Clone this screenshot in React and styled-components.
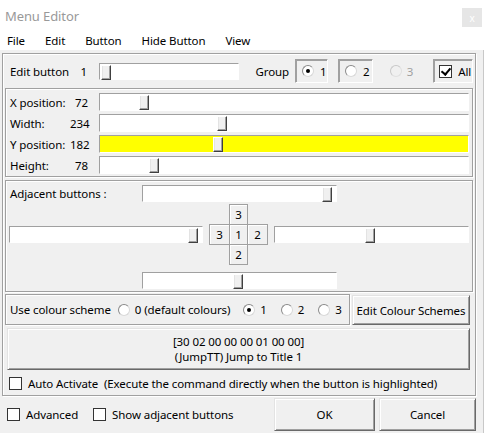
import React from 'react';
import styled, { createGlobalStyle } from 'styled-components';

const GlobalStyle = createGlobalStyle`
    html, body {
        margin: 0;
        padding: 0;
    }
    body {
        width: 484px;
        height: 433px;
        overflow: hidden;
        background: #f0f0f0;
        font-family: "Noto Sans", "Segoe UI", sans-serif;
        font-size: 11.5px;
        letter-spacing: -0.1px;
        color: #000;
    }
`;

const Window = styled.div`
    width: 484px;
    height: 433px;
    display: flex;
    flex-direction: column;
    background: #f0f0f0;
`;

const TitleBar = styled.div`
    height: 30px;
    background: #fff;
    display: flex;
    align-items: flex-start;
    justify-content: space-between;
    padding: 0 2px 0 5px;
    color: #999;
    font-size: 13px;
`;

const Title = styled.span`
    margin-top: 7px;
`;

const CloseBox = styled.div`
    width: 20px;
    height: 19px;
    margin-top: 8px;
    background: #e6e6e6;
    color: #fff;
    font-size: 10px;
    display: flex;
    align-items: center;
    justify-content: center;
`;

const MenuBar = styled.div`
    height: 20px;
    background: #fff;
    display: flex;
    align-items: center;
    gap: 20px;
    padding-left: 7px;
`;

const Body = styled.div`
    flex: 1;
    display: flex;
    flex-direction: column;
    padding: 3px 7px 0 2px;
    border-right: 1px solid #c8c8c8;
`;

const Frame = styled.div`
    height: 343px;
    box-sizing: border-box;
    border: 1px solid #a0a0a0;
    box-shadow: inset 1px 1px 0 #fff, 1px 1px 0 #fff;
    padding: 0 2px;
    display: flex;
    flex-direction: column;
`;

const EditRow = styled.div`
    height: 34px;
    display: flex;
    align-items: center;
    padding-left: 5px;
`;

const Text = styled.span`
    display: inline-block;
    width: ${(p) => (p.w ? `${p.w}px` : 'auto')};
    text-align: ${(p) => p.align || 'left'};
    color: ${(p) => (p.disabled ? '#a0a0a0' : '#000')};
    margin-left: ${(p) => p.ml || 0}px;
    white-space: nowrap;
`;

const Track = styled.div`
    position: relative;
    box-sizing: border-box;
    width: ${(p) => p.w}px;
    height: ${(p) => p.h || 18}px;
    margin-left: ${(p) => p.ml || 0}px;
    background: ${(p) => p.bg || '#fff'};
    border-top: 1px solid #a0a0a0;
    border-left: 1px solid #a0a0a0;
    border-right: 1px solid #fff;
    border-bottom: 1px solid #fff;
    flex-shrink: 0;
`;

const Thumb = styled.div`
    position: absolute;
    top: 1px;
    width: 10px;
    height: 15px;
    box-sizing: border-box;
    background: #f0f0f0;
    border-top: 1px solid #fff;
    border-left: 1px solid #fff;
    border-right: 1px solid #404040;
    border-bottom: 1px solid #404040;
    box-shadow: inset -1px -1px 0 #a0a0a0, inset 1px 0 0 #e3e3e3;
`;

const Slider = ({ w, pos, bg, h, ml }) => (
    <Track w={w} bg={bg} h={h} ml={ml}>
        <Thumb style={{ left: pos }} />
    </Track>
);

const Sunken = styled.div`
    box-sizing: border-box;
    width: ${(p) => p.w}px;
    height: 24px;
    margin-left: ${(p) => p.ml || 0}px;
    display: flex;
    align-items: center;
    gap: 6px;
    padding-left: ${(p) => p.pl || 6}px;
    border-top: 1px solid #a0a0a0;
    border-left: 1px solid #a0a0a0;
    border-right: 1px solid #fff;
    border-bottom: 1px solid #fff;
    box-shadow: 1px 1px 0 #a0a0a0 inset;
`;

const RadioCircle = styled.span`
    display: inline-block;
    box-sizing: border-box;
    width: 12px;
    height: 12px;
    border-radius: 50%;
    border: 1px solid ${(p) => (p.disabled ? '#c8c8c8' : '#8a8a8a')};
    border-right-color: ${(p) => (p.disabled ? '#e0e0e0' : '#d8d8d8')};
    border-bottom-color: ${(p) => (p.disabled ? '#e0e0e0' : '#d8d8d8')};
    background: ${(p) => (p.disabled ? '#f0f0f0' : '#fff')};
    position: relative;
    flex-shrink: 0;
    &::after {
        content: '';
        display: ${(p) => (p.checked ? 'block' : 'none')};
        position: absolute;
        left: 3px;
        top: 3px;
        width: 4px;
        height: 4px;
        border-radius: 50%;
        background: #000;
    }
`;

const CheckBox = styled.span`
    display: inline-block;
    box-sizing: border-box;
    width: 13px;
    height: 13px;
    background: #fff;
    border: 1px solid #333;
    position: relative;
    flex-shrink: 0;
    &::after {
        content: '';
        display: ${(p) => (p.checked ? 'block' : 'none')};
        position: absolute;
        left: 3px;
        top: 0px;
        width: 4px;
        height: 7px;
        border-right: 2px solid #000;
        border-bottom: 2px solid #000;
        transform: rotate(40deg);
    }
`;

const GroupBox = styled.div`
    box-sizing: border-box;
    margin-top: ${(p) => p.mt || 0}px;
    width: ${(p) => (p.w ? `${p.w}px` : 'auto')};
    height: ${(p) => p.h}px;
    border: 1px solid #a0a0a0;
    box-shadow: inset 1px 1px 0 #fff, 1px 1px 0 #fff;
    display: flex;
    flex-direction: column;
    flex-shrink: 0;
`;

const PosRows = styled.div`
    display: flex;
    flex-direction: column;
    gap: 3px;
    padding: 4px 0 0 4px;
`;

const PosRow = styled.div`
    height: 18px;
    display: flex;
    align-items: center;
`;

const AdjRow = styled.div`
    display: flex;
    align-items: center;
    height: 17px;
    margin-top: 4px;
    padding-left: 4px;
`;

const CrossRow = styled.div`
    display: flex;
    align-items: center;
    margin-top: 2px;
    padding-left: 3px;
`;

const Cross = styled.div`
    display: grid;
    grid-template-columns: 20px 19px 20px;
    grid-template-rows: 20px 20px 20px;
    margin: 0 6px;
`;

const CrossCell = styled.div`
    grid-column: ${(p) => p.col};
    grid-row: ${(p) => p.row};
    margin: 0 ${(p) => (p.col === 1 ? -1 : 0)}px -1px ${(p) => (p.col === 3 ? -1 : 0)}px;
    box-sizing: border-box;
    display: flex;
    align-items: center;
    justify-content: center;
    background: #f0f0f0;
    border: 1px solid #a0a0a0;
    box-shadow: inset 1px 1px 0 #fff;
`;

const BottomAdj = styled.div`
    margin-top: 8px;
    padding-left: 136px;
`;

const ColourRow = styled.div`
    display: flex;
    margin-top: 2px;
    align-items: flex-start;
`;

const ColourItems = styled.div`
    height: 100%;
    display: flex;
    align-items: center;
    padding-left: 4px;
    white-space: nowrap;
`;

const RadioItem = styled.span`
    display: inline-flex;
    align-items: center;
    gap: 5px;
    white-space: nowrap;
    margin-left: ${(p) => p.ml || 0}px;
`;

const Button = styled.button`
    box-sizing: border-box;
    width: ${(p) => p.w}px;
    height: ${(p) => p.h}px;
    margin: ${(p) => p.m || '0'};
    padding: 0;
    font-family: inherit;
    font-size: 11.5px;
    letter-spacing: -0.1px;
    color: #000;
    background: #f0f0f0;
    border: 1px solid;
    border-color: #e3e3e3 #696969 #696969 #e3e3e3;
    box-shadow: inset 1px 1px 0 #fff, inset -1px -1px 0 #a0a0a0;
    line-height: 15px;
    white-space: nowrap;
    flex-shrink: 0;
`;

const AutoRow = styled.div`
    display: flex;
    align-items: center;
    gap: 6px;
    margin: 6px 0 0 4px;
`;

const Footer = styled.div`
    display: flex;
    align-items: center;
    height: 34px;
    margin-top: 1px;
    padding-left: 5px;
`;

const CheckItem = styled.span`
    display: inline-flex;
    align-items: center;
    gap: 6px;
    margin-left: ${(p) => p.ml || 0}px;
`;

const Spacer = styled.div`
    flex: 1;
`;

const positions = [
    { label: 'X position:', value: 72, pos: 39 },
    { label: 'Width:', value: 234, pos: 117 },
    { label: 'Y position:', value: 182, pos: 113, bg: '#ffff00' },
    { label: 'Height:', value: 78, pos: 49 }
];

const App = () => (
    <Window>
        <GlobalStyle />
        <TitleBar>
            <Title>Menu Editor</Title>
            <CloseBox>x</CloseBox>
        </TitleBar>
        <MenuBar>
            <span>File</span>
            <span>Edit</span>
            <span>Button</span>
            <span>Hide Button</span>
            <span>View</span>
        </MenuBar>
        <Body>
            <Frame>
                <EditRow>
                    <Text w={71}>Edit button</Text>
                    <Text w={19}>1</Text>
                    <Slider w={140} pos={1} h={17} />
                    <Text ml={16}>Group</Text>
                    <Sunken w={33} ml={6}>
                        <RadioCircle checked />
                        <span>1</span>
                    </Sunken>
                    <Sunken w={35} ml={10}>
                        <RadioCircle />
                        <span>2</span>
                    </Sunken>
                    <RadioItem ml={17}>
                        <RadioCircle disabled />
                        <Text disabled>3</Text>
                    </RadioItem>
                    <Sunken w={40} ml={20} pl={5}>
                        <CheckBox checked />
                        <span>All</span>
                    </Sunken>
                </EditRow>
                <GroupBox h={89}>
                    <PosRows>
                        {positions.map((r) => (
                            <PosRow key={r.label}>
                                <Text w={60}>{r.label}</Text>
                                <Text w={18} align="right">{r.value}</Text>
                                <Slider w={370} pos={r.pos} bg={r.bg} ml={11} />
                            </PosRow>
                        ))}
                    </PosRows>
                </GroupBox>
                <GroupBox h={112} mt={3}>
                    <AdjRow>
                        <Text w={132}>Adjacent buttons :</Text>
                        <Slider w={195} pos={179} h={17} />
                    </AdjRow>
                    <CrossRow>
                        <Slider w={194} pos={178} h={17} />
                        <Cross>
                            <CrossCell col={2} row={1}>3</CrossCell>
                            <CrossCell col={1} row={2}>3</CrossCell>
                            <CrossCell col={2} row={2}>1</CrossCell>
                            <CrossCell col={3} row={2}>2</CrossCell>
                            <CrossCell col={2} row={3}>2</CrossCell>
                        </Cross>
                        <Slider w={195} pos={90} h={17} />
                    </CrossRow>
                    <BottomAdj>
                        <Slider w={195} pos={90} h={17} />
                    </BottomAdj>
                </GroupBox>
                <ColourRow>
                    <GroupBox w={345} h={31}>
                        <ColourItems>
                            <span>Use colour scheme</span>
                            <RadioItem ml={7}>
                                <RadioCircle />
                                <span>0 (default colours)</span>
                            </RadioItem>
                            <RadioItem ml={13}>
                                <RadioCircle checked />
                                <span>1</span>
                            </RadioItem>
                            <RadioItem ml={14}>
                                <RadioCircle />
                                <span>2</span>
                            </RadioItem>
                            <RadioItem ml={14}>
                                <RadioCircle />
                                <span>3</span>
                            </RadioItem>
                        </ColourItems>
                    </GroupBox>
                    <Button w={118} h={30} m="1px 0 0 2px">Edit Colour Schemes</Button>
                </ColourRow>
                <Button w={463} h={42} m="3px 0 0 2px">
                    [30 02 00 00 00 01 00 00]
                    <br />
                    (JumpTT) Jump to Title 1
                </Button>
                <AutoRow>
                    <CheckBox />
                    <span>Auto Activate&nbsp; (Execute the command directly when the button is highlighted)</span>
                </AutoRow>
            </Frame>
            <Footer>
                <CheckItem>
                    <CheckBox />
                    <span>Advanced</span>
                </CheckItem>
                <CheckItem ml={15}>
                    <CheckBox />
                    <span>Show adjacent buttons</span>
                </CheckItem>
                <Spacer />
                <Button w={101} h={33}>OK</Button>
                <Button w={97} h={33} m="0 0 0 4px">Cancel</Button>
            </Footer>
        </Body>
    </Window>
);

export default App;
